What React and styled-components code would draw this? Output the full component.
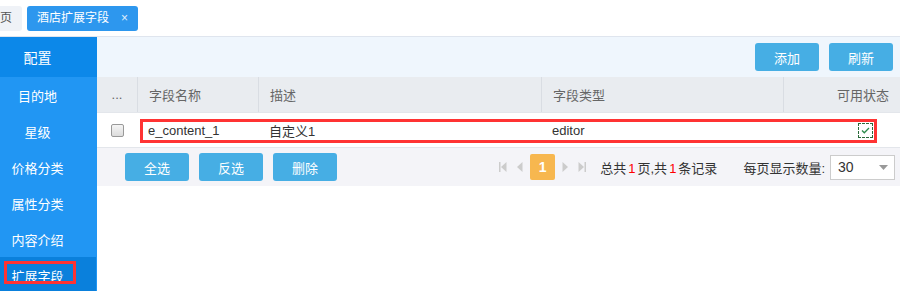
import React from "react"
import styled, { createGlobalStyle } from "styled-components"

const Global = createGlobalStyle`
body {
  margin: 0;
  font-family: "Liberation Sans", "Noto Sans CJK SC", sans-serif;
  font-size: 13px;
  color: #333;
  background: #fff;
}
`

const Page = styled.div`
width: 900px;
height: 291px;
overflow: hidden;
display: flex;
flex-direction: column;
`

const TabBar = styled.div`
height: 36px;
flex: none;
display: flex;
align-items: center;
gap: 5px;
border-bottom: 1px solid #dfe5ee;
overflow: hidden;
`

const Tab = styled.div`
height: 25px;
display: flex;
align-items: center;
gap: 12px;
padding: 0 10px;
border-radius: 3px;
font-size: 12px;
line-height: 25px;
background: ${p => (p.$active ? "#2d97ee" : "#eff2f7")};
color: ${p => (p.$active ? "#fff" : "#555")};
margin-left: ${p => p.$cut || "0"};
`

const Close = styled.span`
font-size: 12px;
opacity: 0.85;
`

const Body = styled.div`
flex: 1;
display: flex;
`

const Sidebar = styled.div`
width: 97px;
flex: none;
background: #2196f3;
display: flex;
flex-direction: column;
`

const SideHead = styled.div`
height: 40px;
width: 75px;
padding-right: 22px;
background: #0c88e9;
color: #fff;
font-size: 14px;
display: flex;
align-items: center;
justify-content: center;
`

const SideItem = styled.div`
height: 36px;
width: 75px;
padding-right: 21px;
margin-right: 1px;
color: #fff;
font-size: 13px;
display: flex;
align-items: center;
justify-content: center;
position: relative;
background: ${p => (p.$active ? "#0a80dc" : "transparent")};
`

const Mark = styled.div`
position: absolute;
box-sizing: border-box;
border: 3px solid #f33;
pointer-events: none;
`

const Main = styled.div`
flex: 1;
display: flex;
flex-direction: column;
`

const Toolbar = styled.div`
height: 40px;
background: #eff6fd;
display: flex;
align-items: center;
justify-content: flex-end;
gap: 10px;
padding-right: 7px;
`

const Btn = styled.button`
width: 64px;
height: 28px;
border: none;
border-radius: 3px;
background: #46aee4;
color: #fff;
font-family: inherit;
font-size: 13px;
padding: 0;
`

const Table = styled.div`
position: relative;
`

const Row = styled.div`
display: grid;
grid-template-columns: 40px 121px 283px 242px 1fr;
height: ${p => (p.$head ? "36px" : "35px")};
background: ${p => (p.$head ? "#e9ecf0" : "#fff")};
border-bottom: 1px solid #e3e6eb;
box-sizing: border-box;
`

const Cell = styled.div`
display: flex;
align-items: center;
padding: 0 11px;
border-left: ${p => (p.$line ? "1px solid #d9dde3" : "none")};
justify-content: ${p => p.$align || "flex-start"};
color: ${p => (p.$head ? "#666" : "#333")};
font-size: 13px;
white-space: nowrap;
`

const Box = styled.span`
width: 11px;
height: 11px;
border: 1px solid #999;
border-radius: 2px;
background: linear-gradient(#f5f5f5, #dcdcdc);
`

const Checked = styled.span`
width: 13px;
height: 13px;
border: 1px dashed #2a6a3a;
display: flex;
align-items: center;
justify-content: center;
margin-right: 16px;
`

const Footer = styled.div`
height: 38px;
background: #f4f4f8;
display: flex;
align-items: center;
padding: 0 5px 0 28px;
gap: 10px;
`

const Pager = styled.div`
margin-left: auto;
display: flex;
align-items: center;
`

const PagerNav = styled.div`
display: flex;
align-items: center;
gap: 6px;
`

const PageNum = styled.span`
width: 25px;
height: 26px;
border-radius: 2px;
background: #f7b74f;
color: #fff;
font-size: 14px;
font-weight: bold;
display: flex;
align-items: center;
justify-content: center;
`

const Info = styled.span`
margin-left: 13px;
font-size: 13px;
color: #333;
em { font-style: normal; color: #f00; margin: 0 2px; }
`

const SizeLabel = styled.span`
margin-left: 26px;
margin-right: 5px;
color: #333;
`

const Select = styled.div`
display: flex;
align-items: center;
justify-content: space-between;
padding: 0 6px 0 7px;
box-sizing: border-box;
width: 65px;
height: 25px;
border: 1px solid #ccc;
background: #fff;
font-size: 14px;
`

const Caret = () => (
  <svg width="9" height="5" viewBox="0 0 9 5"><path d="M0 0h9L4.5 5z" fill="#999" /></svg>
)

const PagerIcon = ({ dir, edge }) => (
  <svg width="10" height="12" viewBox="0 0 10 12">
    {dir === "left" ? (
      <>
        {edge && <rect x="1" y="1" width="1.5" height="10" fill="#ccc" />}
        <path d="M8.5 1v10L3 6z" fill="#ccc" />
      </>
    ) : (
      <>
        <path d="M1.5 1v10L7 6z" fill="#ccc" />
        {edge && <rect x="7.5" y="1" width="1.5" height="10" fill="#ccc" />}
      </>
    )}
  </svg>
)

const menu = ["目的地", "星级", "价格分类", "属性分类", "内容介绍", "扩展字段"]

export default function App() {
  return (
    <Page>
      <Global />
      <TabBar>
        <Tab $cut="-22px">首页</Tab>
        <Tab $active>
          酒店扩展字段<Close>×</Close>
        </Tab>
      </TabBar>
      <Body>
        <Sidebar>
          <SideHead>配置</SideHead>
          {menu.map((m, i) => (
            <SideItem key={m} $active={i === menu.length - 1}>
              {m}
              {i === menu.length - 1 && (
                <Mark style={{ left: 4, top: 4, width: 72, height: 23 }} />
              )}
            </SideItem>
          ))}
        </Sidebar>
        <Main>
          <Toolbar>
            <Btn>添加</Btn>
            <Btn>刷新</Btn>
          </Toolbar>
          <Table>
            <Row $head>
              <Cell $head $align="center">...</Cell>
              <Cell $head $line>字段名称</Cell>
              <Cell $head $line>描述</Cell>
              <Cell $head $line>字段类型</Cell>
              <Cell $head $line $align="flex-end">可用状态</Cell>
            </Row>
            <Row>
              <Cell $align="center"><Box /></Cell>
              <Cell>e_content_1</Cell>
              <Cell>自定义1</Cell>
              <Cell>editor</Cell>
              <Cell $align="flex-end">
                <Checked>
                  <svg width="9" height="7" viewBox="0 0 9 7">
                    <path d="M1 3.5l2.3 2.3L8 1" fill="none" stroke="#2a8a4a" strokeWidth="1.3" />
                  </svg>
                </Checked>
              </Cell>
            </Row>
            <Mark style={{ left: 43, top: 42, width: 737, height: 24 }} />
          </Table>
          <Footer>
            <Btn>全选</Btn>
            <Btn>反选</Btn>
            <Btn>删除</Btn>
            <Pager>
              <PagerNav>
                <PagerIcon dir="left" edge />
                <PagerIcon dir="left" />
                <PageNum>1</PageNum>
                <PagerIcon dir="right" />
                <PagerIcon dir="right" edge />
              </PagerNav>
              <Info>总共<em>1</em>页,共<em>1</em>条记录</Info>
              <SizeLabel>每页显示数量:</SizeLabel>
              <Select>30<Caret /></Select>
            </Pager>
          </Footer>
        </Main>
      </Body>
    </Page>
  )
}
